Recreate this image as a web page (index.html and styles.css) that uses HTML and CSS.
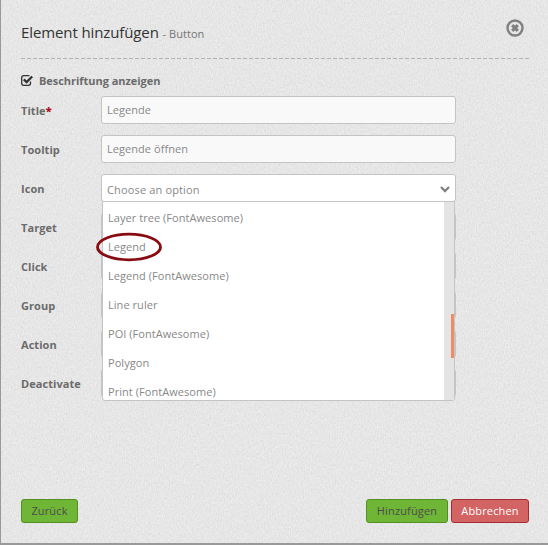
FILE: index.html
```
<!DOCTYPE html>
<html lang="de">
<head>
<meta charset="utf-8">
<title>Element hinzufügen</title>
<link rel="stylesheet" href="styles.css">
</head>
<body>
<main class="dialog">
  <svg class="texture" aria-hidden="true">
    <filter id="grain" x="0" y="0" width="100%" height="100%" color-interpolation-filters="sRGB">
      <feTurbulence type="fractalNoise" baseFrequency="0.85 0.45" numOctaves="2" seed="4"/>
      <feColorMatrix type="matrix" values="0.09 0.05 0 0 0.832  0.09 0.05 0 0 0.832  0.09 0.05 0 0 0.832  0 0 0 0 1"/>
    </filter>
    <rect width="100%" height="100%" filter="url(#grain)"/>
  </svg>
  <header class="head">
    <h1 class="title">Element hinzufügen <span class="subtitle">- Button</span></h1>
    <svg class="close" viewBox="0 0 18 18"><circle cx="9" cy="9" r="7.5" fill="none" stroke="#808080" stroke-width="2.4"/><path d="M6.2 6.2 11.8 11.8M11.8 6.2 6.2 11.8" stroke="#808080" stroke-width="3.2"/></svg>
  </header>
  <svg class="rule" viewBox="0 0 508 1"><path d="M0 .5H508" stroke="#b2b2b2" stroke-dasharray="4 2"/></svg>
  <form class="form">
    <div class="check">
      <svg class="box" viewBox="0 0 13 11"><path d="M9.5 6.5V8.3Q9.5 10.3 7.5 10.3H2.6Q.7 10.3 .7 8.3V2.7Q.7 .7 2.7 .7H8.4" fill="none" stroke="#333" stroke-width="1.3"/><path d="M2.8 4.4 5.6 7.1 11.2 1.5" fill="none" stroke="#333" stroke-width="2.3"/></svg>
      <span>Beschriftung anzeigen</span>
    </div>
    <div class="row"><span class="label">Title<b class="required">*</b></span><div class="field">Legende</div></div>
    <div class="row"><span class="label">Tooltip</span><div class="field">Legende öffnen</div></div>
    <div class="row">
      <span class="label">Icon</span>
      <div class="field select">Choose an option
        <svg class="chevron" viewBox="0 0 10 7"><path d="M1 1 5 5 9 1" fill="none" stroke="#808080" stroke-width="2.3"/></svg>
        <div class="menu">
          <ul class="options">
            <li>Layer tree (FontAwesome)</li>
            <li><span class="marked">Legend<svg class="ring" viewBox="0 0 68 30"><ellipse cx="34" cy="15" rx="31.5" ry="12.8" fill="none" stroke="#870b10" stroke-width="2.8"/></svg></span></li>
            <li>Legend (FontAwesome)</li>
            <li>Line ruler</li>
            <li>POI (FontAwesome)</li>
            <li>Polygon</li>
            <li>Print (FontAwesome)</li>
          </ul>
          <div class="track"><div class="thumb"></div></div>
        </div>
      </div>
    </div>
    <div class="row"><span class="label">Target</span><div class="field"></div></div>
    <div class="row"><span class="label">Click</span><div class="field"></div></div>
    <div class="row"><span class="label">Group</span><div class="field"></div></div>
    <div class="row"><span class="label">Action</span><div class="field"></div></div>
    <div class="row"><span class="label">Deactivate</span><div class="field"></div></div>
  </form>
  <footer class="actions">
    <button class="button back">Zurück</button>
    <button class="button add">Hinzufügen</button>
    <button class="button cancel">Abbrechen</button>
  </footer>
</main>
</body>
</html>
```
FILE: styles.css
```
* { box-sizing: border-box; }
body { margin: 0; font-family: "Open Sans", sans-serif; font-size: 11px; color: #6b6b6b; }
svg { display: block; }
.dialog {
  position: relative;
  z-index: 0;
  display: flex;
  flex-direction: column;
  width: 548px;
  height: 545px;
  padding: 19px 19px 20px 20px;
  border-left: 1px solid #999;
  border-bottom: 2px solid #999;
  background: #e6e6e6;
  overflow: hidden;
}
.texture { position: absolute; inset: 0; z-index: -1; width: 100%; height: 100%; }
.head { display: flex; justify-content: space-between; height: 39px; }
.title { margin: 3px 0 0; font-size: 15px; line-height: 20px; font-weight: 400; letter-spacing: -0.11px; color: #333; }
.subtitle { font-size: 11px; letter-spacing: 0.05px; color: #777; }
.close { width: 18px; height: 18px; margin-right: 5px; }
.rule { width: 508px; height: 1px; }
.form { padding-top: 12px; }
.check { display: flex; align-items: center; height: 18px; font-weight: 700; margin-bottom: 7px; letter-spacing: -0.04px; }
.box { width: 13px; height: 11px; margin-right: 5px; }
.row { display: flex; align-items: center; height: 28px; margin-bottom: 11px; }
.label { width: 80px; font-weight: 700; letter-spacing: 0.06px; }
.required { color: #b00d1c; }
.field {
  display: flex;
  align-items: center;
  width: 355px;
  height: 28px;
  padding: 0 5px 1px;
  border: 1px solid #c4c4c4;
  border-radius: 3px;
  background: #f9f9f9;
  color: #888;
  letter-spacing: 0.05px;
}
.select { position: relative; justify-content: space-between; padding-top: 3px; padding-bottom: 0; background: #fff; letter-spacing: 0.15px; }
.chevron { width: 10px; height: 7px; }
.menu {
  position: absolute;
  z-index: 1;
  top: 26px;
  left: 0;
  display: flex;
  width: 353px;
  height: 200px;
  border: 1px solid #c4c4c4;
  border-radius: 0 0 3px 3px;
  background: #fff;
  letter-spacing: 0.05px;
}
.options { flex: 1; height: 198px; margin: 0; padding: 1px 0 0 5px; list-style: none; }
.options li { display: flex; align-items: center; height: 29px; }
.marked { position: relative; }
.ring { position: absolute; left: -13px; top: -7px; width: 68px; height: 30px; }
.track { width: 10px; height: 198px; padding: 112px 0 0 7px; background: #e4e4e4; }
.thumb { width: 3px; height: 44px; background: #f08c65; }
.actions { display: flex; gap: 3px; margin-top: auto; }
.button {
  height: 24px;
  padding: 0;
  border: 1px solid #52901f;
  border-radius: 3px;
  background: #6fb536;
  font: 11px/20px "Open Sans", sans-serif;
  letter-spacing: 0.15px;
  color: #4c4c4c;
}
.back { width: 57px; margin-right: auto; }
.add { width: 82px; }
.cancel { width: 78px; border-color: #a52d31; background: #d36464; color: #fff; }
```
